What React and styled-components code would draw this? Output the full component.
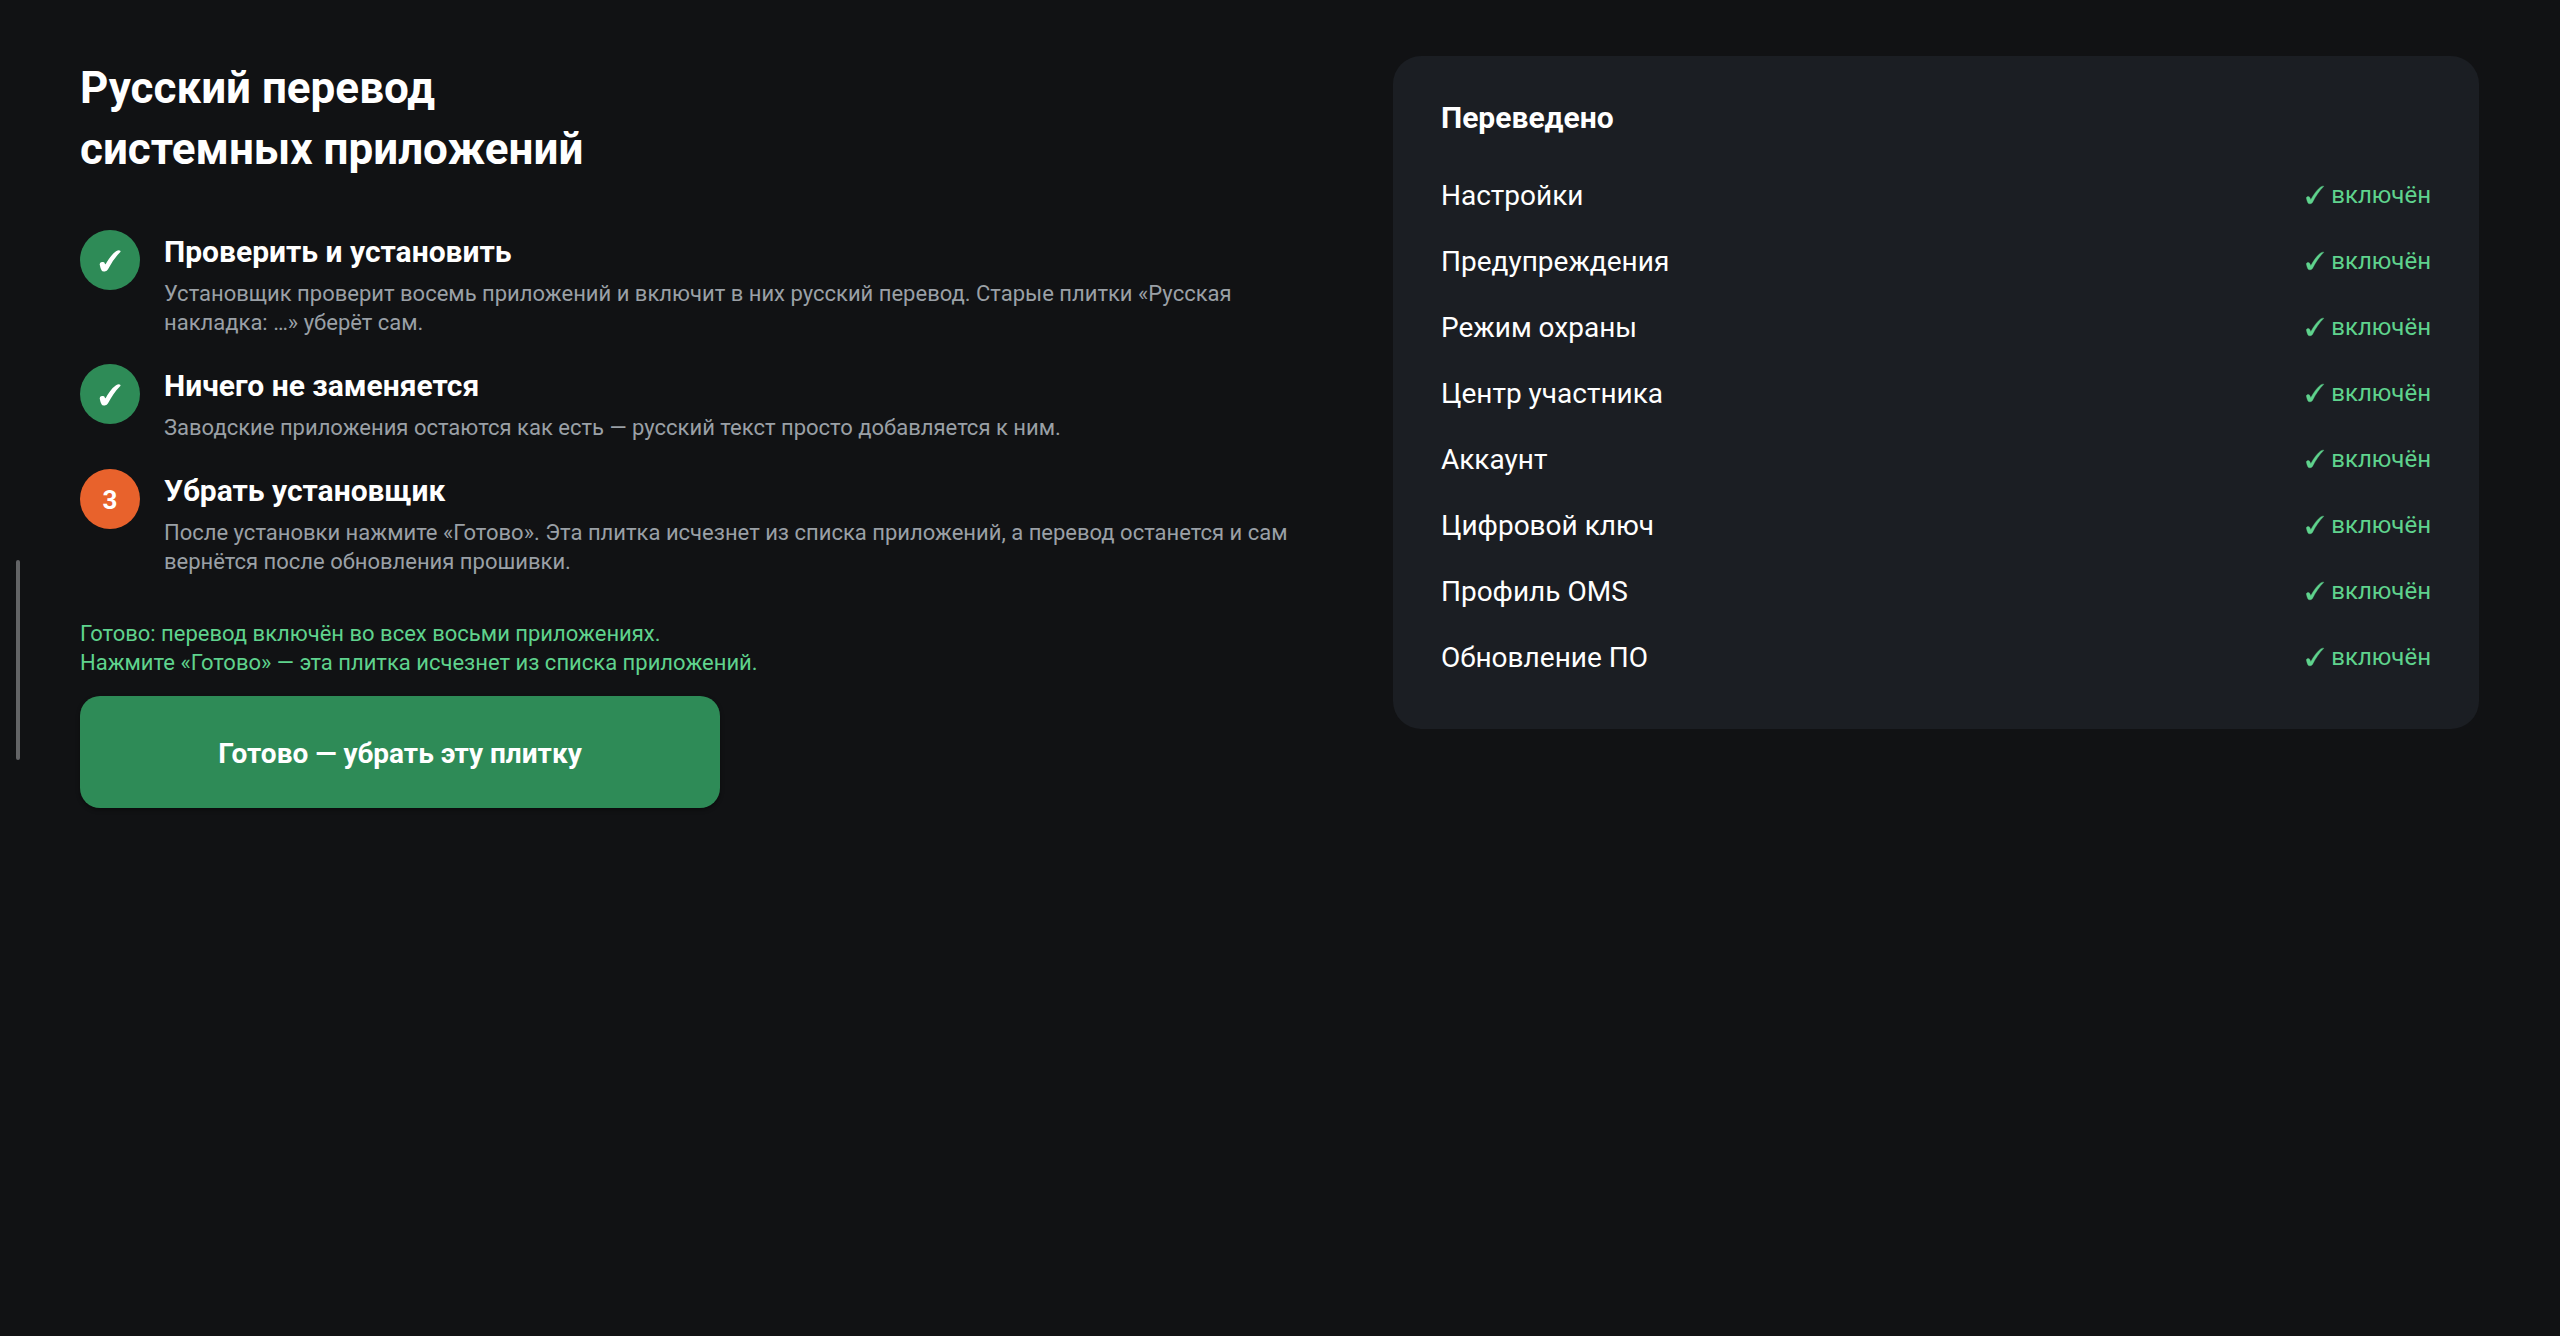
import React from 'react'
import styled, { createGlobalStyle } from 'styled-components'

const steps = [
  {
    title: 'Проверить и установить',
    text:
      'Установщик проверит восемь приложений и включит в них русский перевод. Старые плитки «Русская накладка: …» уберёт сам.',
    done: true,
  },
  {
    title: 'Ничего не заменяется',
    text:
      'Заводские приложения остаются как есть — русский текст просто добавляется к ним.',
    done: true,
  },
  {
    title: 'Убрать установщик',
    text:
      'После установки нажмите «Готово». Эта плитка исчезнет из списка приложений, а перевод останется и сам вернётся после обновления прошивки.',
    done: false,
  },
]

const apps = [
  'Настройки',
  'Предупреждения',
  'Режим охраны',
  'Центр участника',
  'Аккаунт',
  'Цифровой ключ',
  'Профиль OMS',
  'Обновление ПО',
]

const CheckIcon = ({ size, bold }) => (
  <CheckSvg
    width={size}
    height={size}
    viewBox="0 0 18 18"
    $bold={bold}
    aria-hidden="true"
  >
    <path d="M0.4 12C0.3 10.6 3.2 10 3.8 11.5L4.8 13.8C7.8 8.2 11.4 3.2 14.8 0.9C15.9 0.2 17.3 0 17.8 0.3C13.2 4.8 9.6 10.4 6.6 16.2C5.7 17.9 2.6 18.4 2 17C1.3 15.6 0.7 13.8 0.4 12Z" />
  </CheckSvg>
)

const App = () => {
  return (
    <>
      <GlobalStyle />
      <EdgeHandle aria-hidden="true" />
      <PageWrap>
        <InstallWrap>
          <Title>
            Русский перевод
            <br />
            системных приложений
          </Title>
          <StepList>
            {steps.map((step, i) => (
              <Step key={step.title}>
                <StepBadge $done={step.done}>
                  {step.done ? <CheckIcon size={20} bold /> : i + 1}
                </StepBadge>
                <div>
                  <StepTitle>{step.title}</StepTitle>
                  <StepText>{step.text}</StepText>
                </div>
              </Step>
            ))}
          </StepList>
          <Status role="status">
            Готово: перевод включён во всех восьми приложениях.
            <br />
            Нажмите «Готово» — эта плитка исчезнет из списка приложений.
          </Status>
          <DoneButton type="button">Готово — убрать эту плитку</DoneButton>
        </InstallWrap>
        <Card>
          <CardTitle>Переведено</CardTitle>
          <AppList>
            {apps.map(name => (
              <AppRow key={name}>
                <span>{name}</span>
                <AppState>
                  <CheckIcon size={18} />
                  включён
                </AppState>
              </AppRow>
            ))}
          </AppList>
        </Card>
      </PageWrap>
    </>
  )
}

export default App

const GlobalStyle = createGlobalStyle`
  * {
    box-sizing: border-box;
  }
  body {
    margin: 0;
    background-color: #111214;
    color: #fff;
    font-family: Roboto, 'DejaVu Sans', sans-serif;
  }
  h1, h2, h3, p, ol, ul {
    margin: 0;
    padding: 0;
  }
  ol, ul {
    list-style: none;
  }
`

// swipe handle that floats over the left edge of the screen
const EdgeHandle = styled.div`
  position: fixed;
  left: 16px;
  top: 560px;
  width: 4px;
  height: 200px;
  border-radius: 2px;
  background-color: #636466;
`

const CheckSvg = styled.svg`
  flex: none;
  overflow: visible;
  fill: currentColor;
  stroke: currentColor;
  stroke-width: ${({ $bold }) => ($bold ? 1.4 : 0.4)};
  stroke-linejoin: round;
`

const PageWrap = styled.main`
  display: grid;
  grid-template-columns: minmax(0, 1.15fr) minmax(0, 1fr);
  align-items: start;
  gap: 64px;
  padding: 56px 81px 56px 80px;
`

const InstallWrap = styled.section`
  display: flex;
  flex-direction: column;
  align-items: flex-start;
  padding-top: 2px;
`

const Title = styled.h1`
  font-size: 44px;
  font-weight: 700;
  line-height: 61px;
`

const StepList = styled.ol`
  display: flex;
  flex-direction: column;
  gap: 27px;
  margin-top: 50px;
`

const Step = styled.li`
  display: flex;
  align-items: flex-start;
  gap: 24px;
`

const StepBadge = styled.span`
  display: flex;
  flex: none;
  align-items: center;
  justify-content: center;
  width: 60px;
  height: 60px;
  padding-top: 2px;
  border-radius: 50%;
  background-color: ${({ $done }) => ($done ? '#2e8b57' : '#e8622c')};
  font-size: 26px;
  font-weight: 700;
`

const StepTitle = styled.h2`
  font-size: 30px;
  font-weight: 700;
  line-height: 43px;
`

const StepText = styled.p`
  margin-top: 6px;
  color: #9aa0a6;
  font-size: 22px;
  line-height: 29px;
`

const Status = styled.p`
  margin-top: 43px;
  color: #5fd38d;
  font-size: 22px;
  line-height: 29px;
`

const DoneButton = styled.button`
  width: 640px;
  max-width: 100%;
  margin-top: 19px;
  padding: 38px 24px 34px;
  border: 0;
  border-radius: 20px;
  background-color: #2e8b57;
  box-shadow: 0 2px 4px rgba(0, 0, 0, 0.4);
  color: #fff;
  font: 700 28px/40px Roboto, sans-serif;
  cursor: pointer;
`

const Card = styled.section`
  padding: 40px 48px 39px;
  border-radius: 28px;
  background-color: #1b1e23;
`

const CardTitle = styled.h2`
  font-size: 30px;
  font-weight: 700;
  line-height: 43px;
`

const AppList = styled.ul`
  margin-top: 23px;
`

const AppRow = styled.li`
  display: flex;
  align-items: center;
  justify-content: space-between;
  height: 66px;
  font-size: 28px;
`

const AppState = styled.span`
  display: flex;
  align-items: center;
  gap: 7px;
  color: #5fd38d;
  font-size: 24px;
`
